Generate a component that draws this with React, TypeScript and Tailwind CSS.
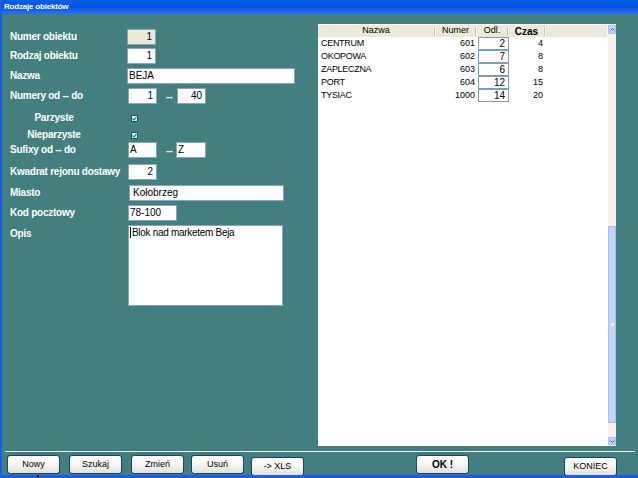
import React from "react";

const F = { fontFamily: '"Liberation Sans", Arial, sans-serif' };

function Box({ w, children, align = "right", bg = "bg-white", ml = "" }: { w: string; children?: React.ReactNode; align?: "right" | "left"; bg?: string; ml?: string }) {
  return (
    <div
      className={`${w} ${bg} ${ml} h-[16px] border border-[#8aa4bd] text-[10px] leading-[14px] text-black flex items-center ${align === "right" ? "justify-end pr-[3px]" : "justify-start pl-[1px]"}`}
    >
      {children}
    </div>
  );
}

function Label({ children, w = "w-[118px]" }: { children: React.ReactNode; w?: string }) {
  return <div className={`${w} shrink-0 text-white font-bold text-[10px] tracking-[-0.25px] leading-[12px]`}>{children}</div>;
}

function Check() {
  return (
    <div className="w-[7px] h-[7px] border border-[#1c5180] bg-white flex items-center justify-center">
      <svg width="5" height="5" viewBox="0 0 5 5"><path d="M0.5 2.5 L2 4 L4.5 1" stroke="#21a121" strokeWidth="1.3" fill="none" /></svg>
    </div>
  );
}

function Btn({ children, w = "w-[53px]", mt = "mt-0", bold = false }: { children: React.ReactNode; w?: string; mt?: string; bold?: boolean }) {
  return (
    <div
      className={`${w} ${mt} h-[19px] rounded-[3px] border border-[#1f3f6e] bg-gradient-to-b from-white via-[#f6f6f2] to-[#e4e2d6] flex items-center justify-center text-black ${bold ? "font-bold text-[10px]" : "text-[9px]"}`}
    >
      {children}
    </div>
  );
}

const rows = [
  { n: "CENTRUM", num: "601", odl: "2", c: "4" },
  { n: "OKOPOWA", num: "602", odl: "7", c: "8" },
  { n: "ZAPLECZNA", num: "603", odl: "6", c: "8" },
  { n: "PORT", num: "604", odl: "12", c: "15" },
  { n: "TYSIAC", num: "1000", odl: "14", c: "20" },
];

function HDiv() {
  return <div className="w-[2px] h-[9px] border-l border-[#c5c2b2] border-r border-r-white shrink-0" />;
}

export default function App() {
  return (
    <div style={F} className="w-[638px] h-[478px] bg-[#427f7e] relative overflow-hidden border-l-2 border-[#1a5ee8]">
      {/* title bar */}
      <div className="h-[14px] bg-gradient-to-b from-[#0b5fe9] via-[#0553e0] to-[#2a72f2] flex items-center pl-[2px]">
        <span className="text-white font-bold text-[8px] tracking-[-0.2px] leading-none">Rodzaje obiektów</span>
      </div>

      {/* body */}
      <div className="flex h-[436px]">
        {/* form */}
        <div className="w-[316px] shrink-0 pl-[8px]">
          <div className="flex items-center mt-[15px]">
            <Label>Numer obiektu</Label>
            <Box w="w-[29px]" bg="bg-[#ece9d8]" ml="-ml-[1px]">1</Box>
          </div>
          <div className="flex items-center mt-[3px]">
            <Label>Rodzaj obiektu</Label>
            <Box w="w-[29px]" ml="-ml-[1px]">1</Box>
          </div>
          <div className="flex items-center mt-[4px]">
            <Label>Nazwa</Label>
            <Box w="w-[168px]" align="left" ml="-ml-[1px]">BEJA</Box>
          </div>
          <div className="flex items-center mt-[4px]">
            <Label>Numery od -- do</Label>
            <Box w="w-[29px]">1</Box>
            <span className="ml-[9px] w-[11px] text-white text-[10px] font-bold">--</span>
            <Box w="w-[29px]">40</Box>
          </div>
          <div className="flex items-center mt-[8px] h-[12px]">
            <Label w="w-[88px] text-center">Parzyste</Label>
            <div className="ml-[33px]"><Check /></div>
          </div>
          <div className="flex items-center mt-[5px] h-[12px]">
            <Label w="w-[88px] text-center">Nieparzyste</Label>
            <div className="ml-[33px]"><Check /></div>
          </div>
          <div className="flex items-center mt-[1px]">
            <Label>Sufixy od -- do</Label>
            <Box w="w-[29px]" align="left">A</Box>
            <span className="ml-[9px] w-[10px] text-white text-[10px] font-bold">--</span>
            <Box w="w-[30px]" align="left">Z</Box>
          </div>
          <div className="flex items-center mt-[6px]">
            <Label>Kwadrat rejonu dostawy</Label>
            <Box w="w-[29px]">2</Box>
          </div>
          <div className="flex items-center mt-[5px]">
            <Label>Miasto</Label>
            <Box w="w-[155px]" align="left" ml="ml-[1px]"><span className="pl-[2px]">Kołobrzeg</span></Box>
          </div>
          <div className="flex items-center mt-[4px]">
            <Label>Kod pocztowy</Label>
            <Box w="w-[49px]" align="left">78-100</Box>
          </div>
          <div className="flex items-start mt-[4px]">
            <Label><span className="block mt-[3px]">Opis</span></Label>
            <div className="w-[155px] h-[81px] bg-white border border-[#8aa4bd] text-[10px] leading-[13px] text-black pl-[1px] tracking-[-0.3px]">
              <span className="border-l border-black pl-[1px]">Blok nad marketem Beja</span>
            </div>
          </div>
        </div>

        {/* list */}
        <div className="mt-[10px] w-[298px] h-[422px] bg-white flex">
          <div className="flex-1 flex flex-col">
            <div className="h-[12px] bg-[#ece9d8] flex items-center text-[9px] text-black mt-[1px]">
              <div className="w-[116px] text-center">Nazwa</div>
              <HDiv />
              <div className="w-[39px] text-center">Numer</div>
              <HDiv />
              <div className="w-[30px] text-center">Odl.</div>
              <HDiv />
              <div className="w-[35px] text-center font-bold text-[10px]">Czas</div>
              <HDiv />
            </div>
            {rows.map((r) => (
              <div key={r.n} className="h-[13px] flex items-center text-[9px] text-black">
                <div className="w-[118px] pl-[3px] tracking-[-0.3px]">{r.n}</div>
                <div className="w-[40px] text-right pr-[1px]">{r.num}</div>
                <div className="ml-[2px] w-[31px] h-[13px] border border-[#7f9db9] text-right pr-[3px] leading-[11px] text-[10px]">{r.odl}</div>
                <div className="w-[34px] text-right">{r.c}</div>
              </div>
            ))}
          </div>
          {/* scrollbar */}
          <div className="w-[9px] bg-[#f4f2ea] border-l border-[#fdfdfb] flex flex-col">
            <div className="h-[9px] mt-[1px] bg-[#c1d3fb] border border-[#b0c4f2] flex items-center justify-center">
              <svg width="5" height="3" viewBox="0 0 5 3"><path d="M0.5 2.5 L2.5 0.5 L4.5 2.5" stroke="#4d6185" fill="none" strokeWidth="1" /></svg>
            </div>
            <div className="h-[192px]" />
            <div className="h-[197px] bg-[#c4d5fc] border border-[#a9bff2] flex items-center justify-center">
              <div className="w-[3px] h-[3px] bg-[#eef3ff]" />
            </div>
            <div className="flex-1" />
            <div className="h-[8px] mb-[1px] bg-[#c1d3fb] border border-[#b0c4f2] flex items-center justify-center">
              <svg width="5" height="3" viewBox="0 0 5 3"><path d="M0.5 0.5 L2.5 2.5 L4.5 0.5" stroke="#4d6185" fill="none" strokeWidth="1" /></svg>
            </div>
          </div>
        </div>
      </div>

      {/* bottom */}
      <div className="mt-[1px] ml-[3px] w-[630px] h-[1px] bg-[#e8eeee]" />
      <div className="flex items-start mt-[3px] pl-[5px]">
        <Btn>Nowy</Btn>
        <div className="ml-[9px]"><Btn>Szukaj</Btn></div>
        <div className="ml-[9px]"><Btn>Zmień</Btn></div>
        <div className="ml-[7px]"><Btn>Usuń</Btn></div>
        <div className="ml-[7px]"><Btn mt="mt-[2px]">-&gt; XLS</Btn></div>
        <div className="ml-[112px]"><Btn bold>OK !</Btn></div>
        <div className="ml-[95px]"><Btn mt="mt-[2px]">KONIEC</Btn></div>
      </div>
      <div className="absolute left-0 right-0 bottom-0 h-[3px] bg-[#1a5ee8]" />
      <div className="absolute left-[35px] bottom-[1px] w-[2px] h-[2px] bg-black" />
    </div>
  );
}
